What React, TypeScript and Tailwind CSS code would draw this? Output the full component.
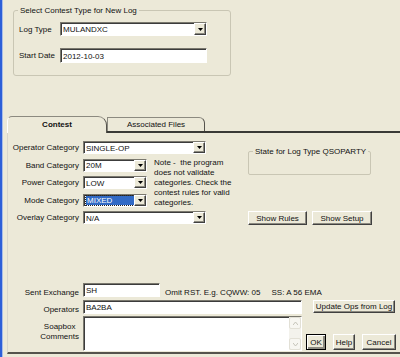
import React from 'react'

function Arrow({ color = '#000' }: { color?: string }) {
  return (
    <svg width="5" height="3" viewBox="0 0 5 3">
      <path d="M0 0h5L2.5 3z" fill={color} />
    </svg>
  )
}

function DropButton() {
  return (
    <div className="flex w-[12px] shrink-0 items-center justify-center border border-t-white border-l-white border-b-[#404040] border-r-[#404040] bg-[#ece9d8] shadow-[inset_-1px_-1px_0_#8c8a80]">
      <Arrow />
    </div>
  )
}

function Select({ value, w, h = 'h-[13px]', selected }: { value: string; w: string; h?: string; selected?: boolean }) {
  return (
    <div className={`${w} ${h} flex shrink-0 border border-t-[#7a786e] border-l-[#7a786e] border-b-white border-r-white bg-white shadow-[inset_1px_1px_0_#3c3c3c]`}>
      <div className="flex flex-1 items-center pl-[2px] pt-[1px]">
        {selected ? (
          <span className="flex h-[9px] w-full items-center bg-[#316ac5] pl-[1px] text-white outline-1 outline-dotted outline-[#222]">{value}</span>
        ) : (
          <span>{value}</span>
        )}
      </div>
      <DropButton />
    </div>
  )
}

function TextBox({ value, w, h = 'h-[14px]' }: { value: string; w: string; h?: string }) {
  return (
    <div className={`${w} ${h} flex shrink-0 items-center border border-t-[#7a786e] border-l-[#7a786e] border-b-white border-r-white bg-white pl-[2px] pt-[1px] shadow-[inset_1px_1px_0_#3c3c3c]`}>
      {value}
    </div>
  )
}

function Btn({ label, w, h = 'h-[14px]', isDefault }: { label: string; w: string; h?: string; isDefault?: boolean }) {
  return (
    <button
      className={`${w} ${h} flex shrink-0 items-center justify-center border bg-[#ece9d8] ${
        isDefault
          ? 'border-black shadow-[inset_1px_1px_0_#fff,inset_-2px_-2px_0_#8c8a80]'
          : 'border-t-white border-l-white border-b-[#404040] border-r-[#404040] shadow-[inset_-1px_-1px_0_#8c8a80]'
      }`}
    >
      {label}
    </button>
  )
}

function Label({ children, className = '' }: { children: React.ReactNode; className?: string }) {
  return <div className={`w-[71px] shrink-0 text-right ${className}`}>{children}</div>
}

// group box: frame with its title sitting on the top edge
function Group({ title, className, children }: { title: string; className: string; children?: React.ReactNode }) {
  return (
    <div className={`relative border border-[#c9c6b4] ${className}`}>
      <span className="absolute -top-[5px] left-[4px] whitespace-nowrap bg-[#ece9d8] px-[2px] leading-[9px]">{title}</span>
      {children}
    </div>
  )
}

export default function App() {
  return (
    <div className="flex h-[357px] w-[400px] overflow-hidden bg-[#ece9d8] font-['Liberation_Sans',Arial,sans-serif] text-[8px] leading-[9px] text-[#111]">
      <div className="w-[2px] shrink-0 bg-[#2d5fd8]" />
      <div className="w-[1px] shrink-0 bg-[#a9bde8]" />

      <div className="flex flex-1 flex-col">
        {/* contest type group */}
        <Group title="Select Contest Type for New Log" className="ml-[10px] mt-[10px] h-[66px] w-[218px] rounded-[3px]">
          <div className="flex flex-col gap-[12px] pl-[5px] pt-[11px]">
            <div className="flex items-center">
              <div className="w-[41px] shrink-0">Log Type</div>
              <Select value="MULANDXC" w="w-[147px]" h="h-[14px]" />
            </div>
            <div className="flex items-center">
              <div className="w-[41px] shrink-0">Start Date</div>
              <TextBox value="2012-10-03" w="w-[147px]" h="h-[15px]" />
            </div>
          </div>
        </Group>

        {/* tabs */}
        <div className="ml-[4px] mt-[40px] flex items-end">
          <div className="relative z-10 -mb-[2px] flex h-[17px] w-[100px] items-center justify-center rounded-tl-[5px] rounded-tr-[9px] border border-b-0 border-l-white border-t-[#8c8a80] border-r-[#55534c] bg-[#ece9d8] pb-[1px] font-bold">
            Contest
          </div>
          <div className="flex h-[14px] w-[98px] items-center justify-center rounded-tr-[6px] border border-b-0 border-l-[#8c8a80] border-t-[#8c8a80] border-r-[#55534c] pb-[1px]">
            Associated Files
          </div>
        </div>

        {/* tab panel */}
        <div className="ml-[4px] flex h-[223px] flex-col border-l border-t-2 border-b-2 border-l-[#d8d6cc] border-t-[#3a3a36] border-b-[#55534c]">
          <div className="flex pt-[8px]">
            {/* category fields */}
            <div className="flex w-[198px] flex-col gap-[4.5px]">
              <div className="flex items-center gap-[4px]">
                <Label>Operator Category</Label>
                <Select value="SINGLE-OP" w="w-[123px]" />
              </div>
              <div className="flex">
                <div className="flex flex-col gap-[4.5px]">
                  <div className="flex items-center gap-[4px]">
                    <Label>Band Category</Label>
                    <Select value="20M" w="w-[64px]" />
                  </div>
                  <div className="flex items-center gap-[4px]">
                    <Label>Power Category</Label>
                    <Select value="LOW" w="w-[64px]" />
                  </div>
                  <div className="flex items-center gap-[4px]">
                    <Label>Mode Category</Label>
                    <Select value="MIXED" w="w-[64px]" selected />
                  </div>
                </div>
                <div className="ml-[7px] -mt-[1px] h-[48px] whitespace-nowrap leading-[10px]">
                  Note -&nbsp; the program
                  <br />
                  does not validate
                  <br />
                  categories. Check the
                  <br />
                  contest rules for valid
                  <br />
                  categories.
                </div>
              </div>
              <div className="flex items-center gap-[4px]">
                <Label>Overlay Category</Label>
                <Select value="N/A" w="w-[123px]" />
              </div>
            </div>

            {/* state group + buttons */}
            <div className="ml-[42px] flex flex-col">
              <Group title="State for Log Type QSOPARTY" className="mt-[10px] h-[24px] w-[123px] rounded-[2px]" />
              <div className="mt-[36px] flex gap-[5px]">
                <Btn label="Show Rules" w="w-[59px]" />
                <Btn label="Show Setup" w="w-[60px]" />
              </div>
            </div>
          </div>

          {/* exchange / operators / soapbox */}
          <div className="mt-auto flex flex-col pb-[1px]">
            <div className="flex items-end gap-[4px]">
              <Label>Sent Exchange</Label>
              <TextBox value="SH" w="w-[77px]" />
              <div className="ml-[1px] whitespace-pre">Omit RST. E.g. CQWW: 05     SS: A 56 EMA</div>
            </div>
            <div className="mt-[3px] flex items-end gap-[4px]">
              <Label>Operators</Label>
              <TextBox value="BA2BA" w="w-[219px]" />
              <div className="mb-[1px] ml-[7px]">
                <Btn label="Update Ops from Log" w="w-[82px]" h="h-[13px]" />
              </div>
            </div>
            <div className="mt-[2px] flex items-start gap-[4px]">
              <div className="flex w-[71px] shrink-0 justify-end pt-[6px]">
                <div className="text-center leading-[10px]">
                  Soapbox
                  <br />
                  Comments
                </div>
              </div>
              <div className="flex h-[35px] w-[219px] shrink-0 border border-t-[#7a786e] border-l-[#7a786e] border-b-white border-r-white bg-white shadow-[inset_1px_1px_0_#3c3c3c]">
                <div className="flex-1" />
                <div className="flex w-[12px] flex-col justify-between bg-[#f3f2ec]">
                  <div className="flex h-[12px] items-center justify-center rounded-[2px] border border-[#e2e0d6] bg-[#f7f6f1]">
                    <svg width="5" height="3" viewBox="0 0 5 3">
                      <path d="M0 3L2.5 0L5 3" fill="none" stroke="#c4c2b8" />
                    </svg>
                  </div>
                  <div className="flex h-[12px] items-center justify-center rounded-[2px] border border-[#e2e0d6] bg-[#f7f6f1]">
                    <svg width="5" height="3" viewBox="0 0 5 3">
                      <path d="M0 0L2.5 3L5 0" fill="none" stroke="#c4c2b8" />
                    </svg>
                  </div>
                </div>
              </div>
              <div className="flex self-end pb-[1px]">
                <Btn label="OK" w="w-[20px]" h="h-[16px]" isDefault />
                <div className="ml-[7px]">
                  <Btn label="Help" w="w-[22px]" h="h-[16px]" />
                </div>
                <div className="ml-[7px]">
                  <Btn label="Cancel" w="w-[34px]" h="h-[16px]" />
                </div>
              </div>
            </div>
          </div>
        </div>
      </div>
    </div>
  )
}
